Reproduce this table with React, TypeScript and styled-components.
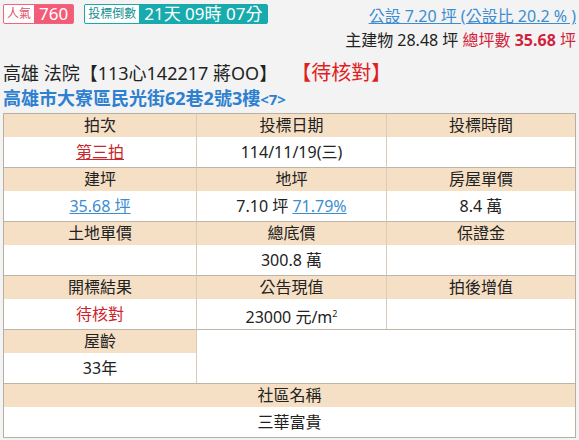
import React from "react";
import styled, { createGlobalStyle } from "styled-components";

const Global = createGlobalStyle`
  html, body { margin: 0; padding: 0; background: #f3f3f3; }
  body { font-family: "Noto Sans", "Noto Sans CJK TC", sans-serif; color: #222; }
`;

const Page = styled.div`
  padding: 0 3px;
  width: 573px;
`;

const TopBar = styled.div`
  display: flex;
  justify-content: space-between;
  align-items: flex-start;
`;

const Badges = styled.div`
  display: flex;
  gap: 10px;
  padding-top: 4px;
`;

const Badge = styled.div<{ $c: string }>`
  display: flex;
  height: 20px;
  border: 1px solid ${(p) => p.$c};
  border-radius: 2px;
  box-sizing: border-box;
  background: ${(p) => p.$c};
`;

const BadgeLabel = styled.span<{ $c: string }>`
  display: flex;
  align-items: center;
  padding: 0 3px;
  background: #fff;
  color: ${(p) => p.$c};
  font-size: 12px;
  line-height: 18px;
  border-radius: 1px 0 0 1px;
`;

const BadgeValue = styled.span<{ $c: string }>`
  display: flex;
  align-items: center;
  padding: 0 5px;
  background: ${(p) => p.$c};
  color: #fff;
  font-size: 17px;
  line-height: 18px;
`;

const Info = styled.div`
  display: flex;
  flex-direction: column;
  align-items: flex-end;
  padding-top: 4px;
  font-size: 16px;
  line-height: 24px;
`;

const PublicLink = styled.a`
  color: #3c8dd0;
  text-decoration: underline;
`;

const Red = styled.span<{ $bold?: boolean }>`
  color: #d21f3c;
  font-weight: ${(p) => (p.$bold ? 700 : 400)};
`;

const Title = styled.div`
  margin-top: 8px;
  font-size: 18px;
  line-height: 26px;
  color: #222;
`;

const Status = styled.span`
  color: #e01e1e;
  font-size: 20px;
  margin-left: 24px;
`;

const Address = styled.div`
  font-size: 18px;
  line-height: 24px;
  font-weight: 700;
  color: #2e80d0;
`;

const Small = styled.span`
  font-size: 15px;
`;

const Table = styled.div`
  margin-top: 2px;
  border: 1px solid #b7afa2;
  display: grid;
  grid-template-columns: 192px 190px 1fr;
  background: #fff;
`;

const Head = styled.div<{ $first?: boolean; $span?: number; $top?: boolean }>`
  grid-column: span ${(p) => p.$span ?? 1};
  height: 23px;
  line-height: 23px;
  background: #f5dfc5;
  text-align: center;
  font-size: 16px;
  color: #222;
  border-left: ${(p) => (p.$first ? "none" : "1px solid #d8cbb8")};
  border-top: ${(p) => (p.$top ? "1px solid #bdb5a8" : "none")};
`;

const Data = styled.div<{ $first?: boolean; $span?: number }>`
  grid-column: span ${(p) => p.$span ?? 1};
  height: 30px;
  line-height: 30px;
  text-align: center;
  font-size: 16px;
  color: #222;
  background: #fff;
  border-left: ${(p) => (p.$first ? "none" : "1px solid #d8cbb8")};
`;

const Blank = styled.div`
  grid-column: span 2;
  grid-row: span 2;
  border-left: 1px solid #d8cbb8;
  border-top: 1px solid #bdb5a8;
  background: #fff;
`;

const RedLink = styled.a`
  color: #c8282c;
  text-decoration: underline;
`;

const BlueLink = styled.a`
  color: #3c8dd0;
  text-decoration: underline;
`;

const RedText = styled.span`
  color: #d0202a;
`;

const Sup = styled.sup`
  font-size: 9px;
  vertical-align: 6px;
`;

type Cell = { h: string; d: React.ReactNode };

const groups: Cell[][] = [
  [
    { h: "拍次", d: <RedLink>第三拍</RedLink> },
    { h: "投標日期", d: "114/11/19(三)" },
    { h: "投標時間", d: "" },
  ],
  [
    { h: "建坪", d: <BlueLink>35.68 坪</BlueLink> },
    { h: "地坪", d: <>7.10 坪 <BlueLink>71.79%</BlueLink></> },
    { h: "房屋單價", d: "8.4 萬" },
  ],
  [
    { h: "土地單價", d: "" },
    { h: "總底價", d: "300.8 萬" },
    { h: "保證金", d: "" },
  ],
  [
    { h: "開標結果", d: <RedText>待核對</RedText> },
    { h: "公告現值", d: <>23000 元/m<Sup>2</Sup></> },
    { h: "拍後增值", d: "" },
  ],
];

export default function App() {
  return (
    <Page>
      <Global />
      <TopBar>
        <Badges>
          <Badge $c="#f0647e">
            <BadgeLabel $c="#e0506c">人氣</BadgeLabel>
            <BadgeValue $c="#f25c78">760</BadgeValue>
          </Badge>
          <Badge $c="#1aa9ab">
            <BadgeLabel $c="#168f91">投標倒數</BadgeLabel>
            <BadgeValue $c="#17abad">21天 09時 07分</BadgeValue>
          </Badge>
        </Badges>
        <Info>
          <PublicLink>公設 7.20 坪 (公設比 20.2 % )</PublicLink>
          <div>
            主建物 28.48 坪 <Red>總坪數</Red> <Red $bold>35.68</Red> <Red>坪</Red>
          </div>
        </Info>
      </TopBar>
      <Title>
        高雄 法院【113心142217 蔣OO】<Status>【待核對】</Status>
      </Title>
      <Address>
        高雄市大寮區民光街62巷2號3樓<Small>&lt;7&gt;</Small>
      </Address>
      <Table>
        {groups.map((g, gi) => (
          <React.Fragment key={gi}>
            {g.map((c, i) => (
              <Head key={"h" + i} $first={i === 0} $top={gi > 0}>
                {c.h}
              </Head>
            ))}
            {g.map((c, i) => (
              <Data key={"d" + i} $first={i === 0}>
                {c.d}
              </Data>
            ))}
          </React.Fragment>
        ))}
        <Head $first $top>屋齡</Head>
        <Blank />
        <Data $first>33年</Data>
        <Head $first $top $span={3}>社區名稱</Head>
        <Data $first $span={3}>三華富貴</Data>
      </Table>
    </Page>
  );
}
